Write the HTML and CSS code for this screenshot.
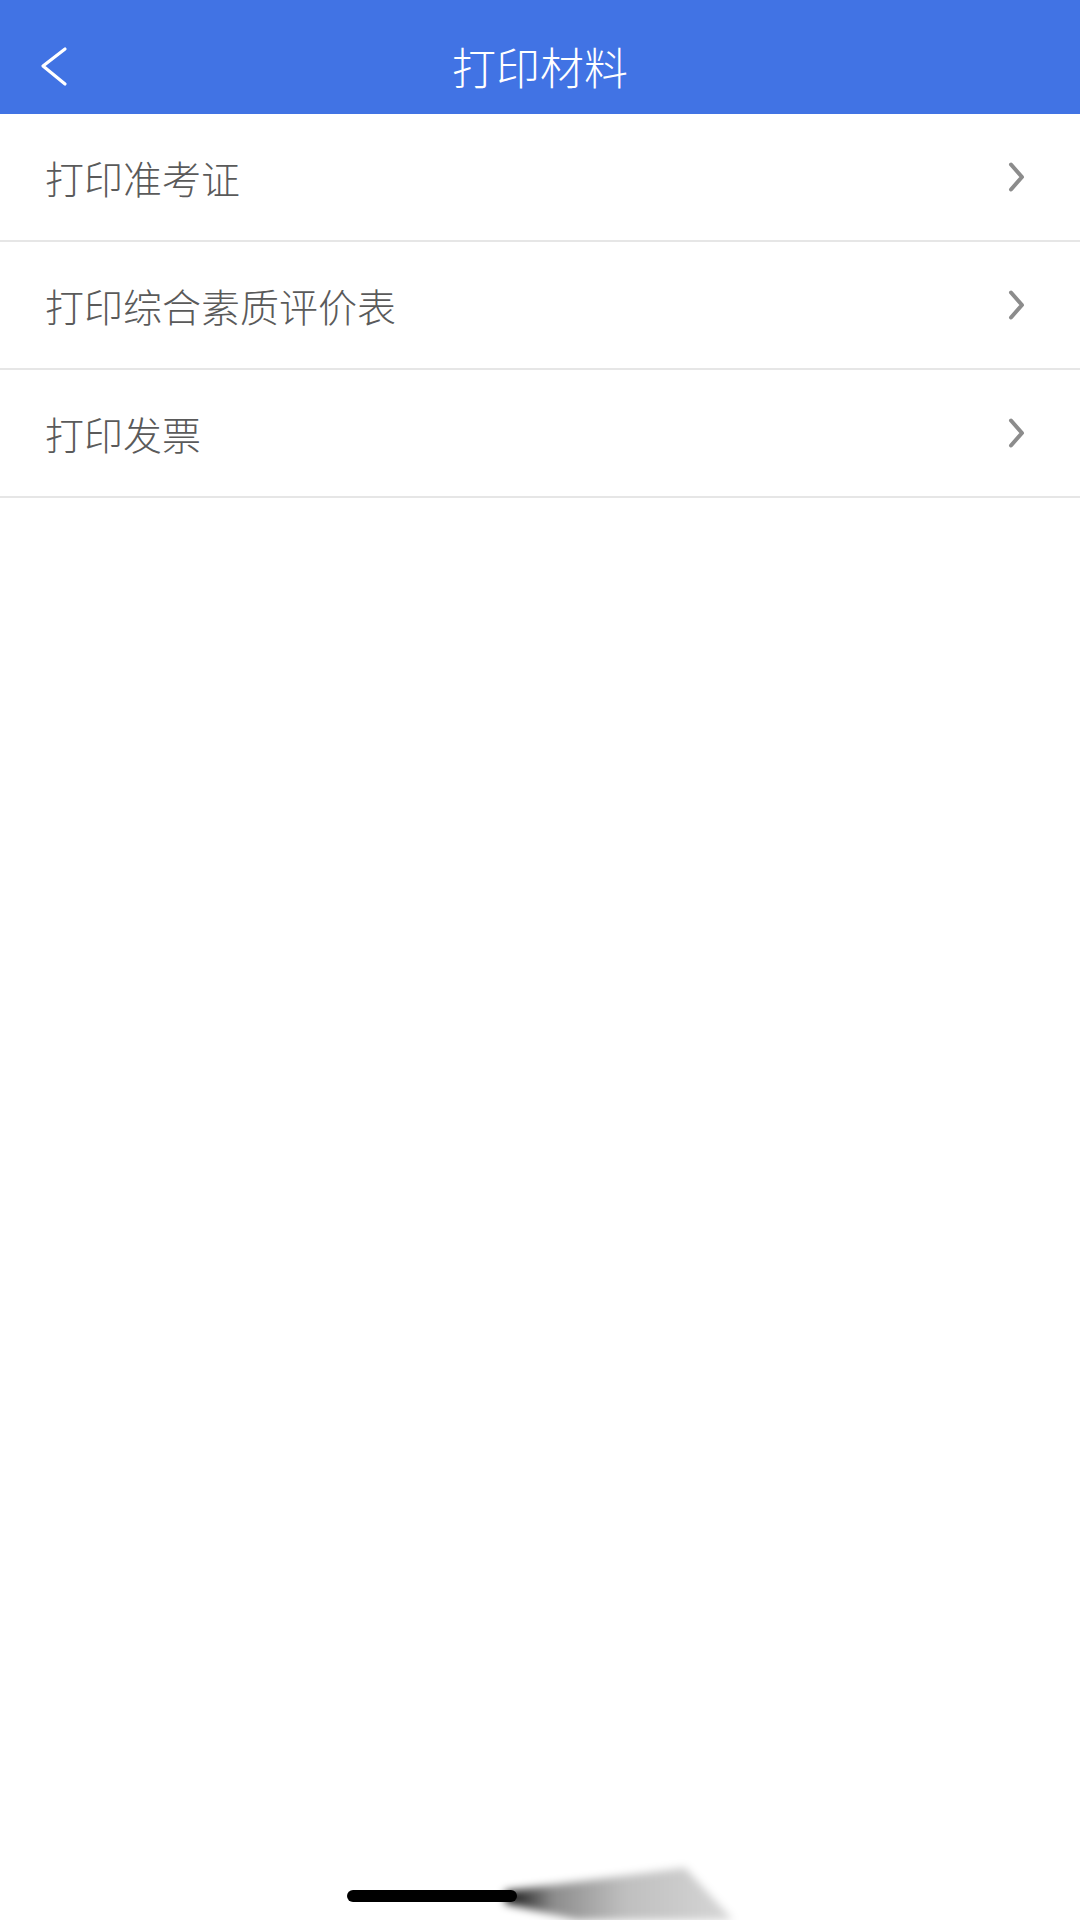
FILE: index.html
```html
<!DOCTYPE html>
<html lang="zh-CN">
<head>
<meta charset="utf-8">
<title>打印材料</title>
<link rel="stylesheet" href="styles.css">
</head>
<body>
<div class="screen">
  <header class="nav">
    <div class="nav-left">
      <svg class="back" width="30" height="44" viewBox="0 0 30 44">
        <polyline points="27,5 5,22 27,40" fill="none" stroke="#ffffff" stroke-width="3.2" stroke-linecap="round" stroke-linejoin="round"/>
      </svg>
    </div>
    <h1 class="title">打印材料</h1>
    <div class="nav-right"></div>
  </header>
  <ul class="list">
    <li class="item"><span class="label">打印准考证</span>
      <svg class="chev" width="20" height="32" viewBox="0 0 20 32"><polyline points="4,3.5 15,16 4,28.5" fill="none" stroke="#8c8c8c" stroke-width="4" stroke-linecap="round" stroke-linejoin="round"/></svg>
    </li>
    <li class="item"><span class="label">打印综合素质评价表</span>
      <svg class="chev" width="20" height="32" viewBox="0 0 20 32"><polyline points="4,3.5 15,16 4,28.5" fill="none" stroke="#8c8c8c" stroke-width="4" stroke-linecap="round" stroke-linejoin="round"/></svg>
    </li>
    <li class="item"><span class="label">打印发票</span>
      <svg class="chev" width="20" height="32" viewBox="0 0 20 32"><polyline points="4,3.5 15,16 4,28.5" fill="none" stroke="#8c8c8c" stroke-width="4" stroke-linecap="round" stroke-linejoin="round"/></svg>
    </li>
  </ul>
  <div class="home-bar"></div>
  <div class="home-blur"><div class="home-blur-shape"></div></div>
</div>
</body>
</html>
```

FILE: styles.css
```css
* { box-sizing: border-box; }
html, body { margin: 0; padding: 0; background: #ffffff; }
body {
  font-family: "Noto Sans CJK SC", "Noto Sans", sans-serif;
}
.screen {
  position: relative;
  width: 1080px;
  height: 1920px;
  overflow: hidden;
  background: #ffffff;
}
.nav {
  height: 114px;
  padding-top: 18px;
  background: #4173e4;
  display: grid;
  grid-template-columns: 1fr auto 1fr;
  align-items: center;
}
.nav-left {
  display: flex;
  align-items: center;
  padding-left: 38px;
}
.back { display: block; }
.title {
  margin: 0;
  font-size: 44px;
  font-weight: 300;
  color: #ffffff;
  line-height: 1;
}
.list {
  list-style: none;
  margin: 0;
  padding: 0;
}
.item {
  height: 128px;
  border-bottom: 2px solid #e6e6e6;
  display: flex;
  align-items: center;
  justify-content: space-between;
  padding-left: 45px;
  padding-right: 53px;
}
.label {
  font-size: 39px;
  font-weight: 300;
  color: #5a5a5a;
  line-height: 1;
}
.chev { display: block; }
.home-bar {
  position: absolute;
  left: 347px;
  top: 1890px;
  width: 170px;
  height: 12px;
  border-radius: 6px;
  background: #000000;
}
.home-blur {
  position: absolute;
  left: 505px;
  top: 1860px;
  width: 240px;
  height: 60px;
  filter: blur(4px);
}
.home-blur-shape {
  width: 100%;
  height: 100%;
  clip-path: polygon(0% 52%, 75% 13%, 95% 100%, 30% 100%, 0% 72%);
  background: linear-gradient(90deg, rgba(0,0,0,0.95) 0%, rgba(0,0,0,0.45) 20%, rgba(0,0,0,0.25) 50%, rgba(0,0,0,0.15) 100%);
}
```
